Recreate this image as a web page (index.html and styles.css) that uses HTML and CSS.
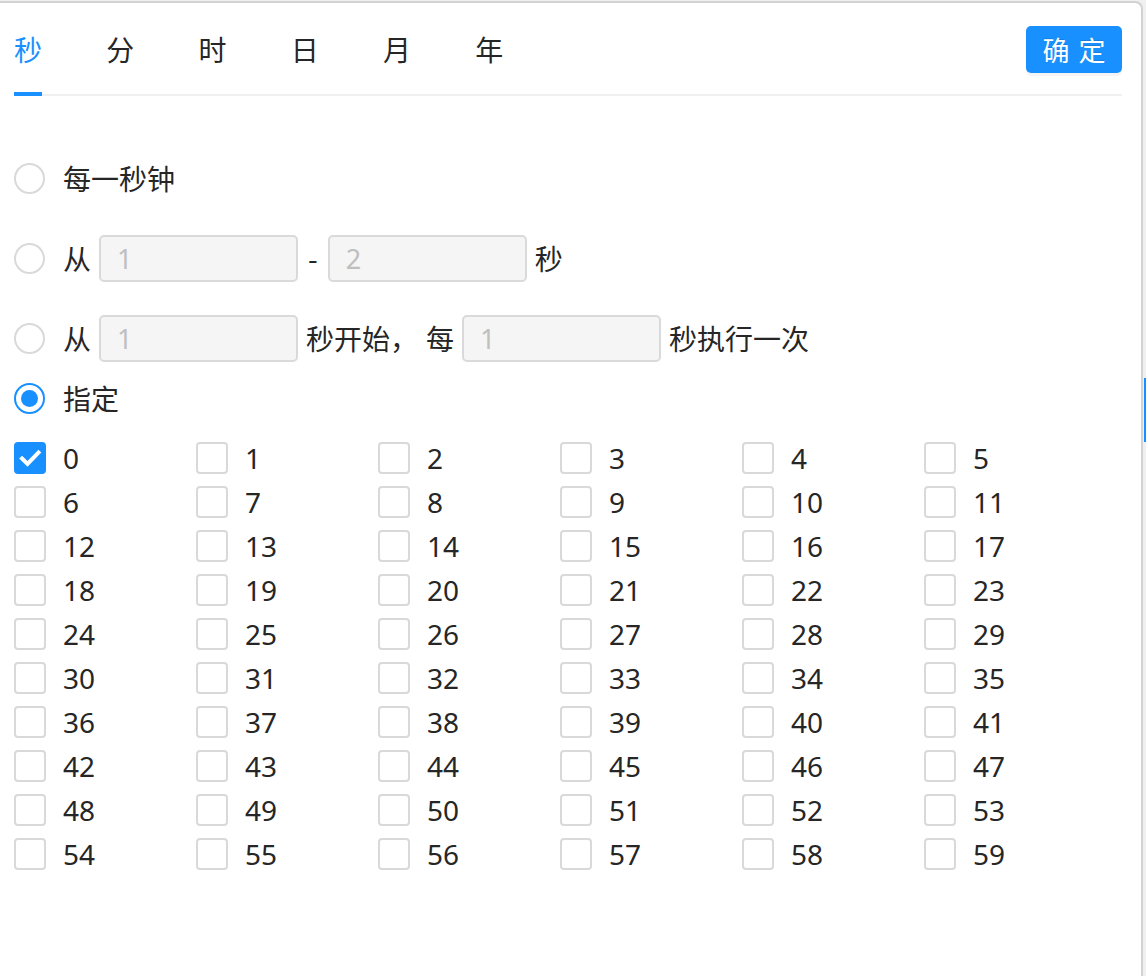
FILE: index.html
```html
<!DOCTYPE html>
<html lang="zh-CN">
<head>
<meta charset="utf-8">
<title>Cron</title>
<link rel="stylesheet" href="styles.css">
</head>
<body>
<div class="card">
  <div class="header">
    <div class="tabs">
      <div class="tab active">秒</div>
      <div class="tab">分</div>
      <div class="tab">时</div>
      <div class="tab">日</div>
      <div class="tab">月</div>
      <div class="tab">年</div>
    </div>
    <button class="btn-primary">确 定</button>
  </div>

  <div class="options">
    <div class="opt row1">
      <span class="radio"></span>
      <span class="txt">每一秒钟</span>
    </div>
    <div class="opt row2">
      <span class="radio"></span>
      <span class="txt">从</span>
      <span class="input">1</span>
      <span class="txt dash">-</span>
      <span class="input">2</span>
      <span class="txt">秒</span>
    </div>
    <div class="opt row3">
      <span class="radio"></span>
      <span class="txt">从</span>
      <span class="input">1</span>
      <span class="txt">秒开始，</span>
      <span class="txt">每</span>
      <span class="input">1</span>
      <span class="txt">秒执行一次</span>
    </div>
    <div class="opt row4">
      <span class="radio checked"><span class="dot"></span></span>
      <span class="txt">指定</span>
    </div>

    <div class="grid" id="grid"></div>
  </div>
</div>
<div class="scroll-indicator"></div>
<script src="app.js"></script>
</body>
</html>
```

FILE: app.js
```js
(function () {
  var grid = document.getElementById('grid');
  var html = '';
  for (var i = 0; i < 60; i++) {
    var checked = i === 0;
    html += '<label class="cell">' +
      '<span class="cb' + (checked ? ' checked' : '') + '">' +
      (checked ? '<svg viewBox="0 0 32 32" width="32" height="32"><path d="M8 16.5 L13.5 22 L24.5 10.5" fill="none" stroke="#fff" stroke-width="4" stroke-linecap="square"/></svg>' : '') +
      '</span><span class="num">' + i + '</span></label>';
  }
  grid.innerHTML = html;
})();
```

FILE: styles.css
```css
html, body {
  margin: 0;
  padding: 0;
}
body {
  background: #f0f0f0;
  font-family: "Noto Sans", "Noto Sans CJK SC", sans-serif;
  color: #262626;
  overflow: hidden;
}
.card {
  box-sizing: border-box;
  width: 1143px;
  min-height: 975px;
  margin-top: 1px;
  background: #fff;
  border-top: 2px solid #d2d2d2;
  border-right: 2px solid #d2d2d2;
  border-top-right-radius: 8px;
  padding: 0 19px 0 14px;
}
.header {
  display: flex;
  justify-content: space-between;
  align-items: flex-start;
  box-shadow: inset 0 -2px 0 #f0f0f0;
}
.tabs {
  display: flex;
  gap: 64.25px;
}
.tab {
  font-family: "Noto Sans CJK SC", sans-serif;
  font-size: 28px;
  line-height: 40px;
  padding-top: 26px;
  padding-bottom: 23px;
  border-bottom: 4px solid transparent;
  color: #262626;
}
.tab.active {
  color: #1890ff;
  border-bottom-color: #1890ff;
}
.btn-primary {
  margin-top: 23px;
  width: 96px;
  height: 47px;
  border: none;
  border-radius: 5px;
  background: #1890ff;
  color: #fff;
  font-family: "Noto Sans CJK SC", sans-serif;
  font-size: 27px;
  word-spacing: 3px;
  line-height: 47px;
  padding: 0;
  box-shadow: 0 3px 0 rgba(0, 0, 0, 0.045);
  text-shadow: 0 -1px 0 rgba(0, 0, 0, 0.12);
}
.options {
  padding-top: 58px;
  display: flex;
  flex-direction: column;
}
.opt {
  display: flex;
  align-items: center;
  height: 48px;
  gap: 8px;
}
.row2, .row3 {
  margin-top: 32px;
}
.row4 {
  margin-top: 12px;
}
.radio {
  box-sizing: border-box;
  width: 31px;
  height: 31px;
  border: 2px solid #d9d9d9;
  border-radius: 50%;
  margin-right: 10px;
  display: flex;
  align-items: center;
  justify-content: center;
  flex: none;
}
.radio.checked {
  border-color: #1890ff;
}
.radio .dot {
  width: 17px;
  height: 17px;
  border-radius: 50%;
  background: #1890ff;
}
.txt {
  font-family: "Noto Sans CJK SC", sans-serif;
  font-size: 28px;
  line-height: 40px;
  white-space: nowrap;
}
.txt.dash {
  margin: 0 2px;
}
.input {
  box-sizing: border-box;
  width: 199px;
  height: 47px;
  border: 2px solid #dadada;
  border-radius: 5px;
  background: #f5f5f5;
  color: #bfbfbf;
  font-size: 27px;
  line-height: 43px;
  padding-left: 16px;
}
.grid {
  margin-top: 14px;
  display: grid;
  grid-template-columns: repeat(6, 182px);
  grid-auto-rows: 44px;
}
.cell {
  display: flex;
  align-items: center;
}
.cb {
  box-sizing: border-box;
  width: 32px;
  height: 32px;
  border: 2px solid #d9d9d9;
  border-radius: 4px;
  margin-right: 17px;
  flex: none;
  display: flex;
  align-items: center;
  justify-content: center;
}
.cb.checked {
  background: #1890ff;
  border-color: #1890ff;
}
.cb svg {
  display: block;
  margin: -2px;
}
.num {
  font-size: 28px;
  line-height: 40px;
  color: #262626;
}
.scroll-indicator {
  position: absolute;
  left: 1144px;
  top: 378px;
  width: 2px;
  height: 64px;
  background: #1890ff;
}
```
